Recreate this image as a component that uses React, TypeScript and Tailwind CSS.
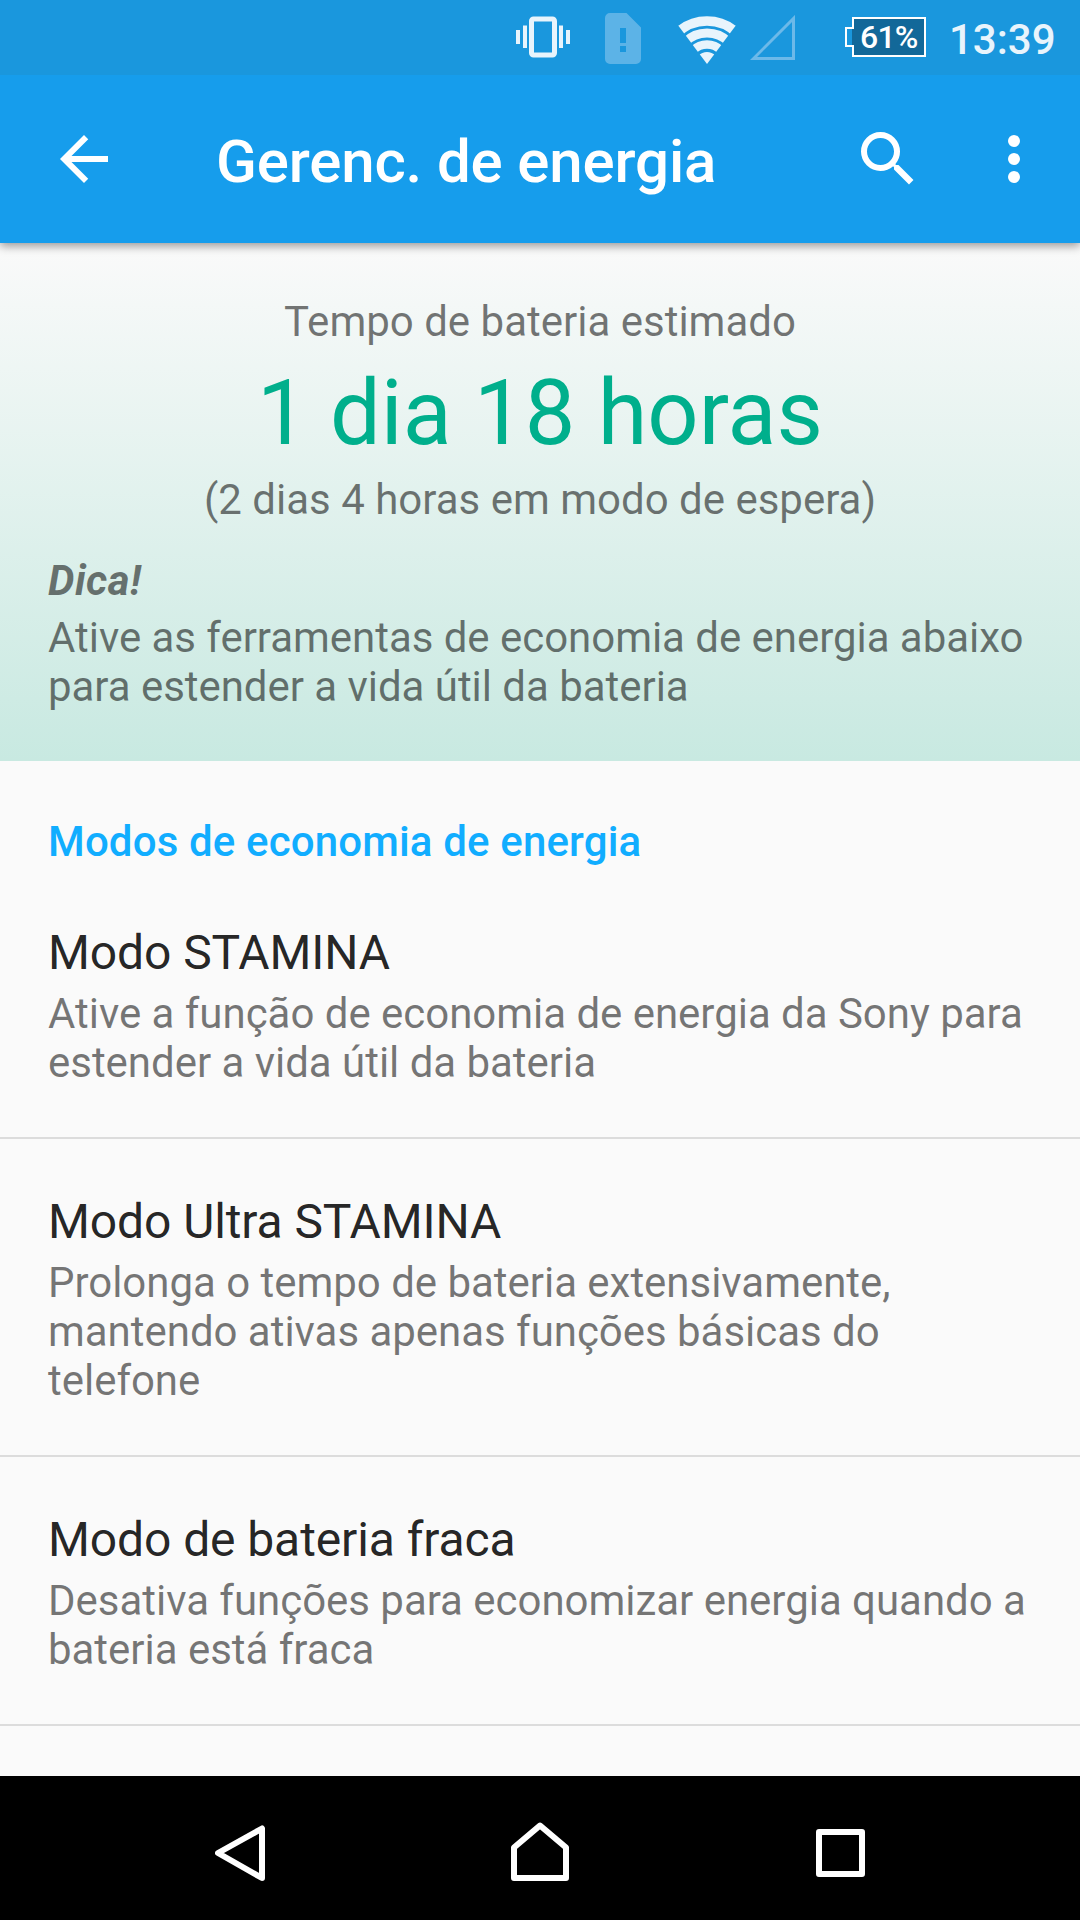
import { MdArrowBack, MdSearch } from "react-icons/md";

type PowerMode = {
  title: string;
  description: string;
};

const modes: PowerMode[] = [
  {
    title: "Modo STAMINA",
    description: "Ative a função de economia de energia da Sony para estender a vida útil da bateria",
  },
  {
    title: "Modo Ultra STAMINA",
    description: "Prolonga o tempo de bateria extensivamente, mantendo ativas apenas funções básicas do telefone",
  },
  {
    title: "Modo de bateria fraca",
    description: "Desativa funções para economizar energia quando a bateria está fraca",
  },
];

function VibrateIcon() {
  return (
    <svg width="54" height="42" viewBox="0 0 54 42" fill="#e8f4fc">
      <rect x="0" y="14" width="4" height="14" />
      <rect x="7" y="9.500" width="4" height="22.500" />
      <rect x="15.500" y="3" width="23" height="36" rx="2" fill="none" stroke="#e8f4fc" strokeWidth="5" />
      <rect x="43" y="9.500" width="4" height="22.500" />
      <rect x="50" y="14" width="4" height="14" />
    </svg>
  );
}

function NoSimIcon() {
  return (
    <svg width="36" height="51" viewBox="0 0 36 51">
      <path
        fill="#5cb3e7"
        fillRule="evenodd"
        d="M5 0H21.500L36 14.500V46a5 5 0 0 1-5 5H5a5 5 0 0 1-5-5V5a5 5 0 0 1 5-5ZM15 15V30H21V15ZM15 33V39H21V33Z"
      />
    </svg>
  );
}

function WifiIcon() {
  return (
    <svg width="58" height="48" viewBox="0 0 58 48">
      <defs>
        <clipPath id="fan">
          <path d="M29 48L-7 0H65Z" />
        </clipPath>
      </defs>
      <g clipPath="url(#fan)">
        <circle cx="29" cy="48" r="12" fill="#e8f4fc" />
        <g fill="none" stroke="#e8f4fc">
          <circle cx="29" cy="48" r="19.500" strokeWidth="8.500" />
          <circle cx="29" cy="48" r="31" strokeWidth="9" />
          <circle cx="29" cy="48" r="43" strokeWidth="9.500" />
        </g>
      </g>
    </svg>
  );
}

function SignalIcon() {
  return (
    <svg width="45" height="46" viewBox="0 0 45 46">
      <path d="M3.500 43.500H43.500V3.500Z" fill="none" stroke="#6cb9e9" strokeWidth="3" />
    </svg>
  );
}

function Battery({ level }: { level: string }) {
  return (
    <div className="relative h-10 w-[81px]">
      <svg className="absolute inset-0" width="81" height="40" viewBox="0 0 81 40">
        <path d="M8 1H80V39H8V29H1V11H8Z" fill="#1a97dd" />
        <rect x="8" y="1" width="72" height="38" fill="#126899" />
        <path d="M8 1H80V39H8V29H1V11H8Z" fill="none" stroke="#fff" strokeWidth="2" />
        <path d="M8 12V28" stroke="#126899" strokeWidth="2" />
      </svg>
      <span className="absolute top-0 left-[15px] text-[32px] leading-[40px] font-medium tracking-[-0.8px] text-white">
        {level}
      </span>
    </div>
  );
}

function StatusBar() {
  return (
    <div className="relative z-20 flex h-[75px] items-start bg-[#1a97dd] pl-[516px]">
      <div className="mt-4">
        <VibrateIcon />
      </div>
      <div className="mt-[13px] ml-[35px]">
        <NoSimIcon />
      </div>
      <div className="mt-4 ml-[37px]">
        <WifiIcon />
      </div>
      <div className="mt-[15px] ml-[14px]">
        <SignalIcon />
      </div>
      <div className="mt-[17px] ml-[50px]">
        <Battery level="61%" />
      </div>
      <span className="mt-[15px] ml-[23px] text-[42px] leading-[49px] font-medium text-[#e8f4fc]">13:39</span>
    </div>
  );
}

function Toolbar() {
  return (
    <header className="relative z-10 flex h-[168px] items-center bg-[#169dec] text-white shadow-[0_3px_9px_rgba(0,0,0,0.4)]">
      <MdArrowBack className="ml-12 size-[72px]" />
      <h1 className="ml-[96px] flex-1 pt-[5px] text-[60px] leading-[71px] font-medium tracking-[-0.15px]">
        Gerenc. de energia
      </h1>
      <MdSearch className="size-[72px]" />
      <svg className="mr-[60px] ml-[84px]" width="12" height="48" viewBox="0 0 12 48" fill="currentColor">
        <circle cx="6" cy="6" r="6" />
        <circle cx="6" cy="24" r="6" />
        <circle cx="6" cy="42" r="6" />
      </svg>
    </header>
  );
}

function BatteryEstimate() {
  return (
    <section className="h-[518px] bg-linear-to-b from-[#fafafa] to-[#c8e9e1] px-12 pt-[54px] text-[42px] leading-[49px] text-black/54">
      <div className="text-center">
        <p>Tempo de bateria estimado</p>
        <p className="mt-[15px] text-[90px] leading-[105px] tracking-[0.06px] text-[#00af8c]">1 dia 18 horas</p>
        <p className="mt-[9px]">(2 dias 4 horas em modo de espera)</p>
      </div>
      <p className="mt-8 font-bold tracking-[0.4px] italic">Dica!</p>
      <p className="mt-2 tracking-[-0.04px]">
        Ative as ferramentas de economia de energia abaixo para estender a vida útil da bateria
      </p>
    </section>
  );
}

function ModeItem({ title, description }: PowerMode) {
  return (
    <li className="border-b-2 border-[#dcdcdc] px-12 pt-[54px] pb-[50px]">
      <h3 className="text-[48px] leading-[57px] tracking-[-0.1px] text-black/87">{title}</h3>
      <p className="mt-2 text-[42px] leading-[49px] tracking-[-0.03px] text-black/54">{description}</p>
    </li>
  );
}

function NavBar() {
  return (
    <nav className="h-36 bg-black text-white">
      <div className="flex h-full items-start">
        <svg
          className="mt-[49px] ml-[215px]"
          width="50"
          height="56"
          viewBox="215 49 50 56"
          fill="none"
          stroke="currentColor"
          strokeWidth="6"
          strokeLinejoin="round"
        >
          <path d="M262 52.500V102L218 77Z" />
        </svg>
        <svg
          className="mt-[46px] ml-[246px]"
          width="58"
          height="59"
          viewBox="511 46 58 59"
          fill="none"
          stroke="currentColor"
          strokeWidth="6"
          strokeLinejoin="round"
        >
          <path d="M514 102V71.500L540 49.500L566 71.500V102Z" />
        </svg>
        <svg
          className="mt-[53px] ml-[247px]"
          width="49"
          height="48"
          viewBox="816 53 49 48"
          fill="none"
          stroke="currentColor"
          strokeWidth="6"
          strokeLinejoin="round"
        >
          <path d="M819 56H862V98H819Z" />
        </svg>
      </div>
    </nav>
  );
}

export default function App() {
  return (
    <div className="flex h-[1920px] w-[1080px] flex-col overflow-hidden bg-[#fafafa] font-['Roboto',sans-serif]">
      <StatusBar />
      <Toolbar />
      <main className="min-h-0 flex-1 overflow-hidden">
        <BatteryEstimate />
        <h2 className="px-12 pt-[56px] pb-1 text-[42px] leading-[49px] font-medium tracking-[0.15px] text-[#11adff]">
          Modos de economia de energia
        </h2>
        <ul>
          {modes.map((mode) => (
            <ModeItem key={mode.title} title={mode.title} description={mode.description} />
          ))}
        </ul>
      </main>
      <NavBar />
    </div>
  );
}
